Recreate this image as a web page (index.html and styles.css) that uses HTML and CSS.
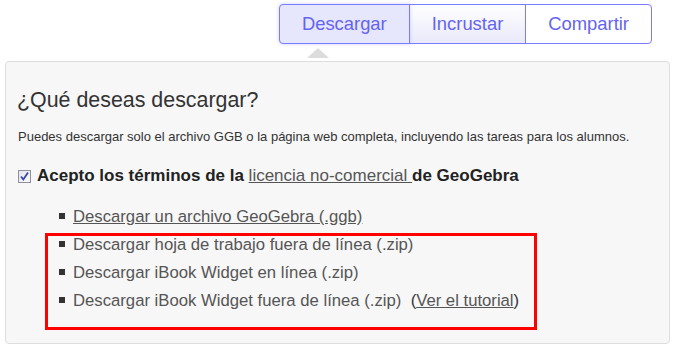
FILE: index.html
```html
<!DOCTYPE html>
<html lang="es">
<head>
    <meta charset="UTF-8">
    <meta name="viewport" content="width=device-width, initial-scale=1.0">
    <title>Descargar</title>
    <link rel="stylesheet" href="styles.css">
</head>
<body>
    <div class="tabs">
        <div class="tab active">Descargar</div>
        <div class="tab gradient">Incrustar</div>
        <div class="tab">Compartir</div>
    </div>

    <div class="panel">
        <h2>¿Qué deseas descargar?</h2>
        <p class="intro">Puedes descargar solo el archivo GGB o la página web completa, incluyendo las tareas para los alumnos.</p>

        <div class="terms">
            <span class="check">
                <svg width="11" height="11" viewBox="0 0 11 11"><path d="M2 5.5 L4.3 8.5 L9 1.5" fill="none" stroke="#3848a8" stroke-width="1.8"/></svg>
            </span>
            <span>Acepto los términos de la <a class="plain" href="#">licencia no-comercial </a>de GeoGebra</span>
        </div>

        <!-- Download links -->
        <div class="downloads">
            <div class="item"><a href="#">Descargar un archivo GeoGebra (.ggb)</a></div>
            <div class="marked">
                <div class="item">Descargar hoja de trabajo fuera de línea (.zip)</div>
                <div class="item">Descargar iBook Widget en línea (.zip)</div>
                <div class="item">Descargar iBook Widget fuera de línea (.zip)&nbsp; <span class="paren">(<a href="#">Ver el tutorial</a>)</span></div>
            </div>
        </div>
    </div>
</body>
</html>
```

FILE: styles.css
```css
/* Download dialog */

body {
    margin: 0;
    background-color: #fff;
    font-family: 'Liberation Sans', Arial, sans-serif;
    color: #333;
}

.tabs {
    display: flex;
    justify-content: flex-end;
    padding: 4px 24px 0 0;
}

.tab {
    position: relative;
    height: 38px;
    line-height: 38px;
    padding: 0 22px;
    border: 1px solid #7b7bff;
    margin-left: -1px;
    font-size: 18.4px;
    color: #6464f0;
    background-color: #fff;
}

.tab:first-child {
    border-radius: 4px 0 0 4px;
}

.tab:last-child {
    border-radius: 0 4px 4px 0;
}

.tab.active {
    background-color: #e6e6fc;
    box-shadow: 0 0 3px 1px rgba(140, 140, 255, 0.25);
    z-index: 1;
}

/* small pointer under the active tab */
.tab.active::after {
    content: "";
    position: absolute;
    left: 27px;
    top: 43px;
    border-left: 11px solid transparent;
    border-right: 11px solid transparent;
    border-bottom: 10px solid #dcdcdc;
}

.tab.gradient {
    background: linear-gradient(#fff, #e9e9fb);
}

.panel {
    margin: 17px 6px 0 5px;
    padding: 0 11px 13px 11px;
    background-color: #f7f7f7;
    border: 1px solid #ddd;
    border-radius: 4px;
}

h2 {
    margin: 25px 0 0 0;
    font-size: 21.4px;
    line-height: 26px;
    font-weight: normal;
    color: #333;
}

.intro {
    margin: 16px 0 0 1px;
    font-size: 13px;
    line-height: 16px;
    color: #333;
}

.terms {
    display: flex;
    align-items: center;
    margin: 21px 0 0 1px;
    font-size: 17px;
    line-height: 20px;
    font-weight: bold;
    color: #222;
}

.check {
    display: inline-flex;
    align-items: center;
    justify-content: center;
    width: 11px;
    height: 11px;
    margin-right: 6px;
    border: 1px solid #8e8f9f;
    background: linear-gradient(135deg, #e4e4ec, #fafafa);
}

a {
    color: #555;
    text-decoration: underline;
}

.plain {
    font-weight: normal;
}

.downloads {
    margin: 22px 0 0 28px;
    font-size: 16.7px;
    color: #555;
}

.item {
    line-height: 18px;
    margin-bottom: 10px;
    padding-left: 14px;
}

.item::before {
    content: "";
    display: inline-block;
    width: 6px;
    height: 6px;
    margin-right: 8px;
    background-color: #333;
    vertical-align: 3px;
}

.downloads > .item {
    margin-bottom: 7px;
}

.marked {
    width: 492px;
    box-sizing: border-box;
    border: 3px solid #ff0000;
    padding: 0 0 7px 0;
}

.marked .item {
    padding-left: 11px;
}

.paren {
    color: #333;
}
```
